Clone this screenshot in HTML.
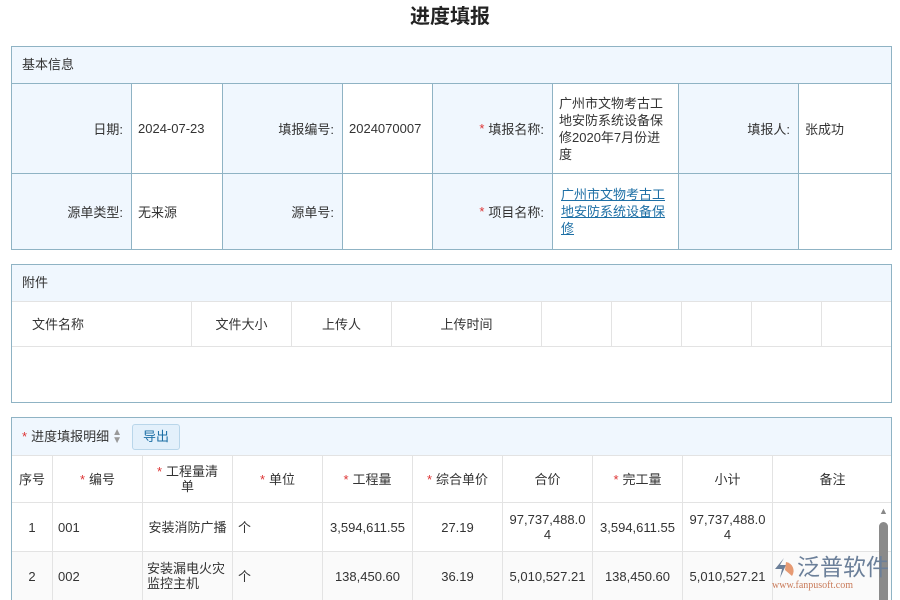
<!DOCTYPE html>
<html><head><meta charset="utf-8"><style>
*{box-sizing:border-box;margin:0;padding:0}
html,body{width:900px;height:600px;overflow:hidden}
body{background:#fff;font-family:"Liberation Sans","Noto Sans CJK SC",sans-serif;font-size:13px;color:#333;position:relative}
.abs{position:absolute}
.title{left:0;width:900px;top:0px;text-align:center;font-size:20px;font-weight:bold;color:#222}
.panel{position:absolute;left:11px;width:881px;border:1px solid #8fb3c4;background:#fff;overflow:hidden}
.ph{height:37px;background:#f0f7fe;line-height:36px;padding-left:10px;font-size:13px}
.c{position:absolute;display:flex;align-items:center;border-right:1px solid #8fb3c4;border-top:1px solid #8fb3c4}
.lab{background:#f0f7fe;justify-content:flex-end;padding-right:8px}
.val{background:#fff;padding-left:6px}
.r{color:#d33;margin-right:4px}
.g{position:absolute;display:flex;align-items:center;justify-content:center;border-right:1px solid #e3e3e3;border-top:1px solid #e3e3e3;text-align:center;line-height:15px}
a{color:#1d6fa5;text-decoration:underline}
</style></head><body>
<div class="abs title">进度填报</div>

<div class="panel" style="top:46px;height:204px">
<div class="ph">基本信息</div>
<div class="c lab" style="left:0;top:36px;width:120px;height:90px">日期:</div>
<div class="c val" style="left:120px;top:36px;width:91px;height:90px">2024-07-23</div>
<div class="c lab" style="left:211px;top:36px;width:120px;height:90px">填报编号:</div>
<div class="c val" style="left:331px;top:36px;width:90px;height:90px">2024070007</div>
<div class="c lab" style="left:421px;top:36px;width:120px;height:90px"><span class="r">*</span>填报名称:</div>
<div class="c val" style="left:541px;top:36px;width:126px;height:90px;line-height:17px;padding-right:8px">广州市文物考古工地安防系统设备保修2020年7月份进度</div>
<div class="c lab" style="left:667px;top:36px;width:120px;height:90px">填报人:</div>
<div class="c val" style="left:787px;top:36px;width:92px;height:90px;border-right:none">张成功</div>
<div class="c lab" style="left:0;top:126px;width:120px;height:76px">源单类型:</div>
<div class="c val" style="left:120px;top:126px;width:91px;height:76px">无来源</div>
<div class="c lab" style="left:211px;top:126px;width:120px;height:76px">源单号:</div>
<div class="c val" style="left:331px;top:126px;width:90px;height:76px"></div>
<div class="c lab" style="left:421px;top:126px;width:120px;height:76px"><span class="r">*</span>项目名称:</div>
<div class="c val" style="left:541px;top:126px;width:126px;height:76px;line-height:17px;padding-right:8px;padding-left:8px"><a>广州市文物考古工地安防系统设备保修</a></div>
<div class="c lab" style="left:667px;top:126px;width:120px;height:76px"></div>
<div class="c val" style="left:787px;top:126px;width:92px;height:76px;border-right:none"></div>
</div>

<div class="panel" style="top:264px;height:139px">
<div class="ph">附件</div>
<div class="g" style="left:0;top:36px;width:180px;height:45px;justify-content:flex-start;padding-left:20px">文件名称</div>
<div class="g" style="left:180px;top:36px;width:100px;height:45px">文件大小</div>
<div class="g" style="left:280px;top:36px;width:100px;height:45px">上传人</div>
<div class="g" style="left:380px;top:36px;width:150px;height:45px">上传时间</div>
<div class="g" style="left:530px;top:36px;width:70px;height:45px"></div>
<div class="g" style="left:600px;top:36px;width:70px;height:45px"></div>
<div class="g" style="left:670px;top:36px;width:70px;height:45px"></div>
<div class="g" style="left:740px;top:36px;width:70px;height:45px"></div>
<div class="g" style="left:810px;top:36px;width:70px;height:45px;border-right:none"></div>
<div class="abs" style="left:0;top:81px;width:879px;border-top:1px solid #e3e3e3"></div>
</div>

<div class="panel" style="top:417px;height:184px;border-bottom:none">
<div class="ph" style="display:flex;align-items:center"><span class="r">*</span>进度填报明细<span style="color:#999;font-size:10px;line-height:8px;margin-left:3px;display:inline-block">▲<br>▼</span>
<span style="margin-left:10px;border:1px solid #b9d6ea;background:#e3f0fb;color:#1d6fa5;border-radius:3px;padding:0 10px;height:26px;line-height:24px">导出</span></div>
<div class="g" style="left:0;top:37px;width:41px;height:47px">序号</div>
<div class="g" style="left:41px;top:37px;width:90px;height:47px"><span class="r">*</span>编号</div>
<div class="g" style="left:131px;top:37px;width:90px;height:47px"><span><span class="r">*</span>工程量清<br>单</span></div>
<div class="g" style="left:221px;top:37px;width:90px;height:47px"><span class="r">*</span>单位</div>
<div class="g" style="left:311px;top:37px;width:90px;height:47px"><span class="r">*</span>工程量</div>
<div class="g" style="left:401px;top:37px;width:90px;height:47px"><span class="r">*</span>综合单价</div>
<div class="g" style="left:491px;top:37px;width:90px;height:47px">合价</div>
<div class="g" style="left:581px;top:37px;width:90px;height:47px"><span class="r">*</span>完工量</div>
<div class="g" style="left:671px;top:37px;width:90px;height:47px">小计</div>
<div class="g" style="left:761px;top:37px;width:119px;height:47px;border-right:none">备注</div>

<div class="g" style="left:0;top:84px;width:41px;height:49px">1</div>
<div class="g" style="left:41px;top:84px;width:90px;height:49px;justify-content:flex-start;padding-left:5px">001</div>
<div class="g" style="left:131px;top:84px;width:90px;height:49px">安装消防广播</div>
<div class="g" style="left:221px;top:84px;width:90px;height:49px;justify-content:flex-start;padding-left:5px">个</div>
<div class="g" style="left:311px;top:84px;width:90px;height:49px">3,594,611.55</div>
<div class="g" style="left:401px;top:84px;width:90px;height:49px">27.19</div>
<div class="g" style="left:491px;top:84px;width:90px;height:49px">97,737,488.0<br>4</div>
<div class="g" style="left:581px;top:84px;width:90px;height:49px">3,594,611.55</div>
<div class="g" style="left:671px;top:84px;width:90px;height:49px">97,737,488.0<br>4</div>
<div class="g" style="left:761px;top:84px;width:119px;height:49px;border-right:none"></div>

<div class="g" style="left:0;top:133px;width:41px;height:49px;background:#fafafa">2</div>
<div class="g" style="left:41px;top:133px;width:90px;height:49px;justify-content:flex-start;padding-left:5px;background:#fafafa">002</div>
<div class="g" style="left:131px;top:133px;width:90px;height:49px;text-align:left;justify-content:flex-start;padding-left:4px;background:#fafafa">安装漏电火灾<br>监控主机</div>
<div class="g" style="left:221px;top:133px;width:90px;height:49px;justify-content:flex-start;padding-left:5px;background:#fafafa">个</div>
<div class="g" style="left:311px;top:133px;width:90px;height:49px;background:#fafafa">138,450.60</div>
<div class="g" style="left:401px;top:133px;width:90px;height:49px;background:#fafafa">36.19</div>
<div class="g" style="left:491px;top:133px;width:90px;height:49px;background:#fafafa">5,010,527.21</div>
<div class="g" style="left:581px;top:133px;width:90px;height:49px;background:#fafafa">138,450.60</div>
<div class="g" style="left:671px;top:133px;width:90px;height:49px;background:#fafafa">5,010,527.21</div>
<div class="g" style="left:761px;top:133px;width:119px;height:49px;border-right:none;background:#fafafa"></div>
<div class="abs" style="left:867px;top:88px;color:#888;font-size:9px">▲</div>
<div class="abs" style="left:867px;top:104px;width:9px;height:90px;background:#8a8a8a;border-radius:5px"></div>
</div>

<div class="abs" style="left:772px;top:553px;width:120px;height:47px">
<svg class="abs" style="left:0;top:3px" width="24" height="24" viewBox="0 0 24 24"><path d="M12 2 L3 13 L10 13 L8 22 L14 9 L8 9 Z" fill="#6b7f99"/><path d="M14 6 A9 9 0 0 1 20 20 L13 14 Z" fill="#e69a73"/></svg>
<div class="abs" style="left:25px;top:-1px;font-size:23px;color:#6b7f99;white-space:nowrap;line-height:30px">泛普软件</div>
<div class="abs" style="left:0;top:27px;font-size:10px;color:#c97b5a;font-family:'Liberation Serif',serif;white-space:nowrap">www.fanpusoft.com</div>
</div>
</body></html>
